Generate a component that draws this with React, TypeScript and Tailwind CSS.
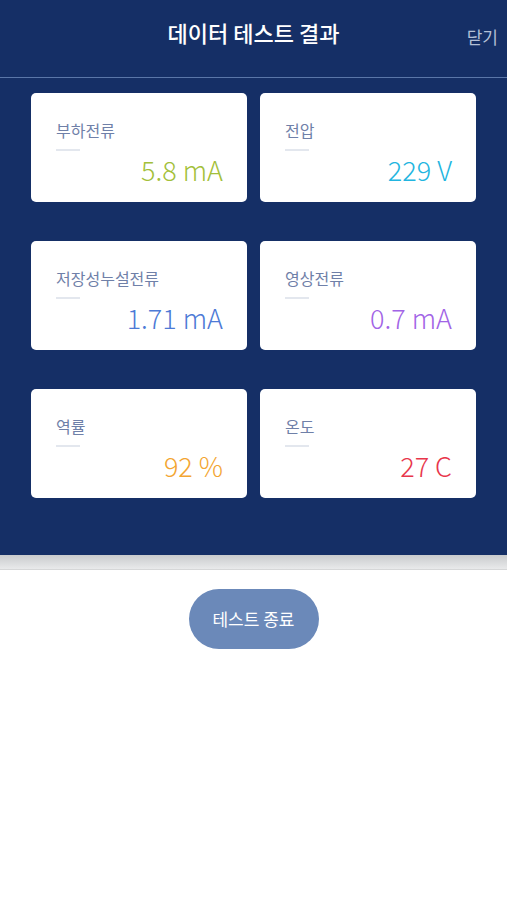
import React from "react";

const items = [
  { label: "부하전류", value: "5.8 mA", color: "text-[#a3bf3a]" },
  { label: "전압", value: "229 V", color: "text-[#22b5e0]" },
  { label: "저장성누설전류", value: "1.71 mA", color: "text-[#4d7ad6]" },
  { label: "영상전류", value: "0.7 mA", color: "text-[#a264e6]" },
  { label: "역률", value: "92 %", color: "text-[#f3a531]" },
  { label: "온도", value: "27 C", color: "text-[#e8364b]" },
];

export default function App() {
  return (
    <div
      className="w-[507px] h-[900px] bg-white flex flex-col"
      style={{ fontFamily: '"Noto Sans CJK KR", "Noto Sans", sans-serif' }}
    >
      {/* Header */}
      <div className="bg-[#152f66] h-[78px] relative flex items-center justify-center border-b border-[#5a76a8]">
        <h1 className="text-white text-[22px] font-medium -mt-[12px]">데이터 테스트 결과</h1>
        <button className="absolute right-[9px] top-[24px] text-[#b4c0d6] text-[17px]">닫기</button>
      </div>

      {/* Result grid */}
      <div className="bg-[#152f66] h-[477px] px-[31px] pt-[15px]">
        <div className="grid grid-cols-2 gap-x-[13px] gap-y-[39px]">
          {items.map((it) => (
            <div key={it.label} className="bg-white rounded-[5px] h-[109px] pl-[25px] pr-[24px] pt-[25px]">
              <div className="text-[#6f80a8] text-[16px] leading-[24px]">{it.label}</div>
              <div className="w-[24px] h-[2px] bg-[#e3e7ee] mt-[7px]" />
              <div className={`text-right text-[27px] font-light leading-[30px] mt-[4px] ${it.color}`}>
                {it.value}
              </div>
            </div>
          ))}
        </div>
      </div>

      {/* Divider strip */}
      <div className="h-[15px] bg-gradient-to-b from-[#c9cbcd] to-[#e9eaeb] border-b border-[#d6d7d8]" />

      {/* Footer button */}
      <div className="flex justify-center pt-[19px]">
        <button className="w-[130px] h-[60px] rounded-full bg-[#6b89b9] text-white text-[17px]">
          테스트 종료
        </button>
      </div>
    </div>
  );
}
